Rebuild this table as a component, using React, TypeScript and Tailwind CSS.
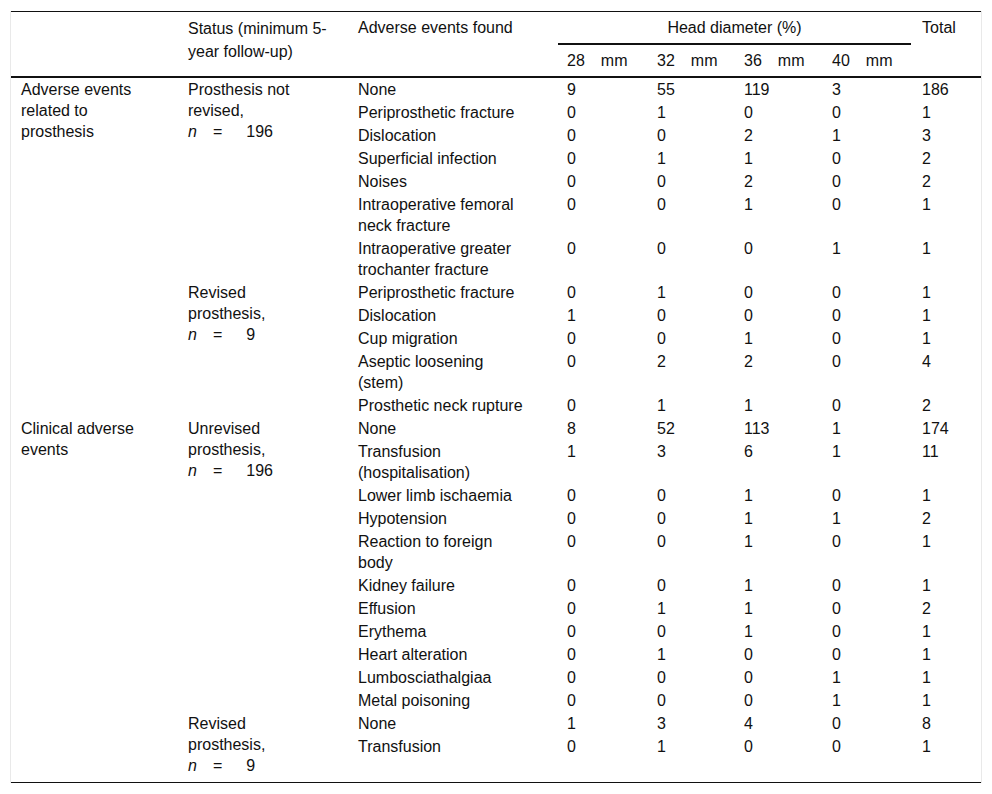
import React from 'react';

type Row = [string, number, number, number, number, number];

type Section = {
  group?: string[];
  groupSpan?: number;
  status: string[];
  n: string;
  rows: Row[];
};

const sections: Section[] = [
  {
    group: ['Adverse events', 'related to', 'prosthesis'],
    groupSpan: 12,
    status: ['Prosthesis not', 'revised,'],
    n: '196',
    rows: [
      ['None', 9, 55, 119, 3, 186],
      ['Periprosthetic fracture', 0, 1, 0, 0, 1],
      ['Dislocation', 0, 0, 2, 1, 3],
      ['Superficial infection', 0, 1, 1, 0, 2],
      ['Noises', 0, 0, 2, 0, 2],
      ['Intraoperative femoral\nneck fracture', 0, 0, 1, 0, 1],
      ['Intraoperative greater\ntrochanter fracture', 0, 0, 0, 1, 1],
    ],
  },
  {
    status: ['Revised', 'prosthesis,'],
    n: '9',
    rows: [
      ['Periprosthetic fracture', 0, 1, 0, 0, 1],
      ['Dislocation', 1, 0, 0, 0, 1],
      ['Cup migration', 0, 0, 1, 0, 1],
      ['Aseptic loosening\n(stem)', 0, 2, 2, 0, 4],
      ['Prosthetic neck rupture', 0, 1, 1, 0, 2],
    ],
  },
  {
    group: ['Clinical adverse', 'events'],
    groupSpan: 13,
    status: ['Unrevised', 'prosthesis,'],
    n: '196',
    rows: [
      ['None', 8, 52, 113, 1, 174],
      ['Transfusion\n(hospitalisation)', 1, 3, 6, 1, 11],
      ['Lower limb ischaemia', 0, 0, 1, 0, 1],
      ['Hypotension', 0, 0, 1, 1, 2],
      ['Reaction to foreign\nbody', 0, 0, 1, 0, 1],
      ['Kidney failure', 0, 0, 1, 0, 1],
      ['Effusion', 0, 1, 1, 0, 2],
      ['Erythema', 0, 0, 1, 0, 1],
      ['Heart alteration', 0, 1, 0, 0, 1],
      ['Lumbosciathalgiaa', 0, 0, 0, 1, 1],
      ['Metal poisoning', 0, 0, 0, 1, 1],
    ],
  },
  {
    status: ['Revised', 'prosthesis,'],
    n: '9',
    rows: [
      ['None', 1, 3, 4, 0, 8],
      ['Transfusion', 0, 1, 0, 0, 1],
    ],
  },
];

const td = 'px-[10px] py-px align-top text-left font-normal';
const th = 'px-[10px] py-[5px] align-top text-left font-normal';

function Mm({ v }: { v: string }) {
  return (
    <span>
      {v}
      <span className="ml-[16px]">mm</span>
    </span>
  );
}

export default function App() {
  return (
    <div className="min-h-screen bg-white">
      <div className="mx-[10px] mt-[11px] border-x border-[#e9e9e9]">
        <table
          className="w-[970px] table-fixed border-collapse text-[16px] leading-[21px] text-[#111]"
          style={{ fontFamily: '"Liberation Sans", Arial, sans-serif' }}
        >
          <colgroup>
            <col className="w-[167px]" />
            <col className="w-[170px]" />
            <col className="w-[209px]" />
            <col className="w-[90px]" />
            <col className="w-[87px]" />
            <col className="w-[88px]" />
            <col className="w-[90px]" />
            <col className="w-[69px]" />
          </colgroup>
          <thead>
            <tr className="border-t border-[#111]">
              <th rowSpan={2} className={th}></th>
              <th rowSpan={2} className={`${th} leading-[23px]`}>
                Status (minimum 5-
                <br />
                year follow-up)
              </th>
              <th rowSpan={2} className={th}>
                Adverse events found
              </th>
              <th colSpan={4} className="p-0 align-top font-normal">
                <div className="mx-px border-b-2 border-[#111] py-[5px] text-center">Head diameter (%)</div>
              </th>
              <th rowSpan={2} className={th}>
                Total
              </th>
            </tr>
            <tr className="border-b-2 border-[#111]">
              <th className={th}>
                <Mm v="28" />
              </th>
              <th className={th}>
                <Mm v="32" />
              </th>
              <th className={th}>
                <Mm v="36" />
              </th>
              <th className={th}>
                <Mm v="40" />
              </th>
            </tr>
          </thead>
          <tbody className="border-b border-[#111]">
            {sections.map((s, si) =>
              s.rows.map((r, ri) => {
                const tail = si === sections.length - 1 && ri === s.rows.length - 1;
                return (
                  <tr key={`${si}-${ri}`} className={tail ? 'h-[47px]' : ''}>
                    {ri === 0 && s.group && (
                      <td rowSpan={s.groupSpan} className={td}>
                        {s.group.map((g, gi) => (
                          <React.Fragment key={gi}>
                            {gi > 0 && <br />}
                            {g}
                          </React.Fragment>
                        ))}
                      </td>
                    )}
                    {ri === 0 && (
                      <td rowSpan={s.rows.length} className={td}>
                        {s.status[0]}
                        <br />
                        {s.status[1]}
                        <br />
                        <i>n</i>
                        <span className="ml-[16px]">=</span>
                        <span className="ml-[24px]">{s.n}</span>
                      </td>
                    )}
                    <td className={`${td} whitespace-pre-line`}>{r[0]}</td>
                    <td className={td}>{r[1]}</td>
                    <td className={td}>{r[2]}</td>
                    <td className={td}>{r[3]}</td>
                    <td className={td}>{r[4]}</td>
                    <td className={td}>{r[5]}</td>
                  </tr>
                );
              })
            )}
          </tbody>
        </table>
      </div>
    </div>
  );
}
